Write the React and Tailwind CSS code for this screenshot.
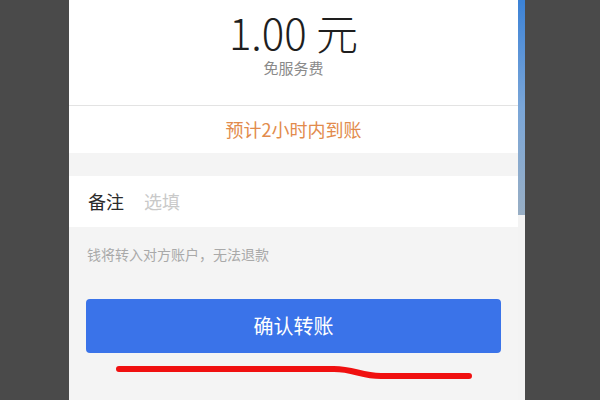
export default function App() {
  return (
    <div
      className="flex h-[400px] w-[600px] overflow-hidden bg-[#4a4a4a]"
      style={{ fontFamily: '"Noto Sans CJK SC", "Noto Sans", sans-serif' }}
    >
      <div className="w-[69px] shrink-0" />

      {/* phone screen */}
      <div className="relative flex w-[449px] shrink-0 flex-col bg-[#f4f4f4]">
        <div className="flex h-[106px] flex-col items-center border-b border-[#e3e3e3] bg-white">
          <div className="mt-[10px] text-[42px] font-light leading-[44px] text-[#1e1e1e]">
            1.00 元
          </div>
          <div className="mt-[4px] text-[15px] leading-[20px] text-[#8a8a8a]">免服务费</div>
        </div>
        <div className="flex h-[47px] items-center justify-center bg-white text-[18px] text-[#e28b4c]">
          预计2小时内到账
        </div>
        <div className="h-[23px]" />
        <div className="flex h-[51px] items-center gap-[20px] bg-white px-[19px] text-[18px]">
          <span className="text-[#2b2b2b]">备注</span>
          <span className="text-[#c9c9c9]">选填</span>
        </div>
        <div className="px-[18px] pt-[16px] text-[14px] leading-[22px] text-[#a9a9a9]">
          钱将转入对方账户，无法退款
        </div>
        <div className="mx-[17px] mt-[34px] flex h-[54px] items-center justify-center rounded-[4px] bg-[#3a73e9] text-[20px] text-white">
          确认转账
        </div>

        {/* red underline scribble */}
        <svg
          className="absolute left-0 top-[360px]"
          width="449"
          height="24"
          viewBox="0 0 449 24"
        >
          <path
            d="M50 9 L265 9 C285 9 292 16 312 16 L400 16"
            fill="none"
            stroke="#f01010"
            strokeWidth="6"
            strokeLinecap="round"
          />
        </svg>
      </div>

      {/* edge of another window */}
      <div className="flex w-[7px] shrink-0 flex-col">
        <div className="h-[215px] bg-gradient-to-b from-[#3b82d6] via-[#7aa6d8] to-[#98aec4]" />
        <div className="flex-1 bg-[#f3f3f3]" />
      </div>
    </div>
  );
}
